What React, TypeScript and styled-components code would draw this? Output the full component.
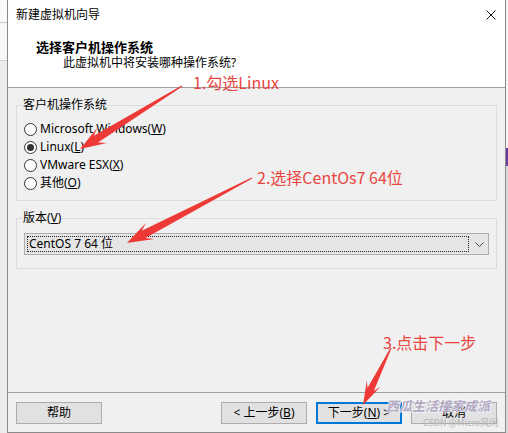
import React from 'react';
import styled, { createGlobalStyle } from 'styled-components';

const Global = createGlobalStyle`
  html, body { margin: 0; padding: 0; }
  body {
    width: 508px; height: 433px; overflow: hidden; background: #f0f0f0;
    font-family: "Noto Sans", "Noto Sans CJK SC", sans-serif;
    color: #000;
  }
  u { text-decoration-thickness: 1px; text-underline-offset: 1px; }
`;

const Screen = styled.div`
  position: relative;
  width: 508px;
  height: 433px;
  display: flex;
  overflow: hidden;
`;

const EdgeLeft = styled.div`
  width: 7px;
  flex: none;
  background: linear-gradient(#fbfbfb 0 22px, #c8c8c8 22px 23px, #f7f7f7 23px 60px, #cfcfcf 60px 61px, #ececec 61px);
`;

const EdgeRight = styled.div`
  flex: 1;
  background: linear-gradient(#f4f4f4 0 148px, #6b3aa0 148px 166px, #d8d8d8 166px);
`;

const Window = styled.div`
  width: 499px;
  flex: none;
  box-sizing: border-box;
  border: 1px solid #8a8a8a;
  border-top: none;
  display: flex;
  flex-direction: column;
  background: #f0f0f0;
`;

const TitleBar = styled.div`
  height: 30px;
  flex: none;
  background: #fff;
  display: flex;
  align-items: center;
  justify-content: space-between;
  padding: 0 9px 0 8px;
  font-size: 12px;
  line-height: 16px;
`;

const Header = styled.div`
  height: 58px;
  flex: none;
  box-sizing: border-box;
  background: #fff;
  border-bottom: 1px solid #a0a0a0;
  padding: 9px 0 0 28px;
`;

const HeaderTitle = styled.div`
  font-size: 13px;
  font-weight: bold;
  line-height: 16px;
`;

const HeaderSub = styled.div`
  font-size: 12px;
  line-height: 16px;
  padding-left: 27px;
`;

const Body = styled.div`
  flex: 1;
  display: flex;
  flex-direction: column;
  padding: 0 8px;
`;

const Group = styled.fieldset<{ $top: number; $bottom: number }>`
  margin: ${p => p.$top}px 0 0;
  border: 1px solid #dcdcdc;
  padding: 0 7px ${p => p.$bottom}px;
  min-width: 0;
`;

const Legend = styled.legend`
  font-size: 12px;
  line-height: 16px;
  padding: 0 1px;
  margin-left: -2px;
`;

const RadioList = styled.div`
  margin-top: 7px;
  display: flex;
  flex-direction: column;
`;

const RadioRow = styled.label`
  height: 18px;
  display: flex;
  align-items: center;
  gap: 3px;
  font-size: 12px;
  line-height: 16px;
  white-space: pre;
`;

const RadioDot = styled.span<{ $on?: boolean }>`
  width: 13px;
  height: 13px;
  box-sizing: border-box;
  border-radius: 50%;
  border: 1px solid #333;
  background: #fff;
  display: flex;
  align-items: center;
  justify-content: center;
  &::after {
    content: '';
    width: 7px;
    height: 7px;
    border-radius: 50%;
    background: ${p => (p.$on ? '#333' : 'transparent')};
  }
`;

const Combo = styled.div`
  margin-top: 7px;
  height: 22px;
  box-sizing: border-box;
  border: 1px solid #adadad;
  background: #e5e5e5;
  display: flex;
  align-items: center;
  padding: 0 4px 0 2px;
  gap: 6px;
`;

const ComboValue = styled.div`
  flex: 1;
  height: 16px;
  box-sizing: border-box;
  border: 1px dotted #222;
  font-size: 12px;
  line-height: 14px;
  padding-left: 1px;
`;

const Footer = styled.div`
  flex: none;
  border-top: 1px solid #a0a0a0;
  padding: 9px 8px 8px;
  display: flex;
  gap: 9px;
`;

const Spacer = styled.div`
  flex: 1;
`;

const Button = styled.div<{ $primary?: boolean }>`
  width: 86px;
  height: 22px;
  box-sizing: border-box;
  background: #e1e1e1;
  border: ${p => (p.$primary ? '2px solid #0078d7' : '1px solid #adadad')};
  display: flex;
  align-items: center;
  justify-content: center;
  font-size: 12px;
  line-height: 16px;
  white-space: pre;
`;

const Overlay = styled.svg`
  position: absolute;
  left: 0;
  top: 0;
  pointer-events: none;
`;

const Note = styled.span<{ $x: number; $y: number }>`
  position: absolute;
  left: ${p => p.$x}px;
  top: ${p => p.$y}px;
  font-family: "Noto Sans CJK SC", sans-serif;
  font-size: 16px;
  line-height: 22px;
  color: #e8453e;
  white-space: nowrap;
`;

const Watermark = styled.span`
  position: absolute;
  left: 386px;
  top: 397px;
  font-family: "Noto Sans CJK SC", sans-serif;
  font-size: 13px;
  line-height: 18px;
  font-weight: 900;
  font-style: italic;
  color: rgba(165, 155, 185, 0.8);
  -webkit-text-stroke: 1px #fff;
  paint-order: stroke fill;
  white-space: nowrap;
`;

const Credit = styled.span`
  position: absolute;
  left: 423px;
  top: 417px;
  font-family: "Noto Sans CJK SC", sans-serif;
  font-size: 9px;
  line-height: 12px;
  color: #b4b4b4;
  white-space: nowrap;
`;

function arrow(x1: number, y1: number, x2: number, y2: number, headLen: number, headW: number, neckW: number) {
  const dx = x2 - x1, dy = y2 - y1;
  const len = Math.hypot(dx, dy);
  const ux = dx / len, uy = dy / len;
  const px = -uy, py = ux;
  const nx = x2 - ux * headLen * 0.72, ny = y2 - uy * headLen * 0.72;
  const bx = x2 - ux * headLen, by = y2 - uy * headLen;
  const pts = [
    [x1 + px * 0.6, y1 + py * 0.6],
    [nx + px * neckW / 2, ny + py * neckW / 2],
    [bx + px * headW / 2, by + py * headW / 2],
    [x2, y2],
    [bx - px * headW / 2, by - py * headW / 2],
    [nx - px * neckW / 2, ny - py * neckW / 2],
    [x1 - px * 0.6, y1 - py * 0.6],
  ];
  return pts.map(p => `${p[0].toFixed(1)},${p[1].toFixed(1)}`).join(' ');
}

export default function App() {
  return (
    <>
      <Global />
      <Screen>
        <EdgeLeft />
        <Window>
          <TitleBar>
            <span>新建虚拟机向导</span>
            <svg width="10" height="10" viewBox="0 0 10 10">
              <path d="M0.5 0.5 L9.5 9.5 M9.5 0.5 L0.5 9.5" stroke="#111" strokeWidth="1" />
            </svg>
          </TitleBar>
          <Header>
            <HeaderTitle>选择客户机操作系统</HeaderTitle>
            <HeaderSub>此虚拟机中将安装哪种操作系统?</HeaderSub>
          </Header>
          <Body>
            <Group $top={9} $bottom={8}>
              <Legend>客户机操作系统</Legend>
              <RadioList>
                <RadioRow><RadioDot /><span>Microsoft Windows(<u>W</u>)</span></RadioRow>
                <RadioRow><RadioDot $on /><span>Linux(<u>L</u>)</span></RadioRow>
                <RadioRow><RadioDot /><span>VMware ESX(<u>X</u>)</span></RadioRow>
                <RadioRow><RadioDot /><span>其他(<u>O</u>)</span></RadioRow>
              </RadioList>
            </Group>
            <Group $top={9} $bottom={13}>
              <Legend>版本(<u>V</u>)</Legend>
              <Combo>
                <ComboValue>CentOS 7 64 位</ComboValue>
                <svg width="9" height="5" viewBox="0 0 9 5">
                  <path d="M0.5 0.5 L4.5 4.5 L8.5 0.5" fill="none" stroke="#444" strokeWidth="1" />
                </svg>
              </Combo>
            </Group>
          </Body>
          <Footer>
            <Button>帮助</Button>
            <Spacer />
            <Button><span>&lt; 上一步(<u>B</u>)</span></Button>
            <Button $primary><span>下一步(<u>N</u>) &gt;</span></Button>
            <Button>取消</Button>
          </Footer>
        </Window>
        <EdgeRight />
        <Watermark>西瓜生活撞家成派</Watermark>
        <Credit>CSDN @Micro风闲</Credit>
        <Overlay width="508" height="433" viewBox="0 0 508 433">
          <polygon points={arrow(182, 86, 80, 149, 26, 18, 8)} fill="#ee3a36" />
          <polygon points={arrow(252, 178, 127, 243, 26, 18, 8)} fill="#ee3a36" />
          <polygon points={arrow(391, 348, 363, 405, 24, 15, 7)} fill="#ee3a36" />
        </Overlay>
        <Note $x={193} $y={71}>1.勾选Linux</Note>
        <Note $x={257} $y={166}>2.选择CentOs7 64位</Note>
        <Note $x={383} $y={331}>3.点击下一步</Note>
      </Screen>
    </>
  );
}
